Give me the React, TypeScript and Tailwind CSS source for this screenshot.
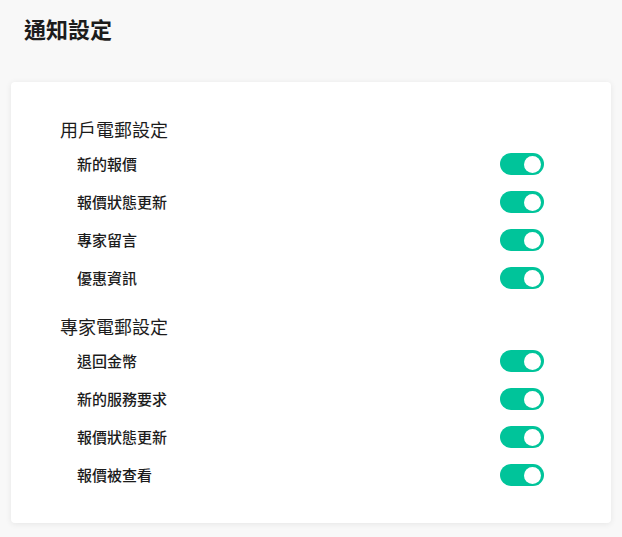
import { useState } from 'react';

const groups = [
  { title: '用戶電郵設定', items: ['新的報價', '報價狀態更新', '專家留言', '優惠資訊'] },
  { title: '專家電郵設定', items: ['退回金幣', '新的服務要求', '報價狀態更新', '報價被查看'] },
];

function Toggle({ on, onClick }: { on: boolean; onClick: () => void }) {
  return (
    <button
      onClick={onClick}
      className={`flex h-[22px] w-[44px] items-center rounded-full px-[3px] ${
        on ? 'justify-end bg-[#00c49a]' : 'justify-start bg-[#cfcfcf]'
      }`}
    >
      <span className="block h-[17px] w-[17px] rounded-full bg-white" />
    </button>
  );
}

export default function App() {
  const [state, setState] = useState<Record<string, boolean>>({});

  return (
    <div
      className="min-h-[537px] bg-[#f8f8f8] px-[11px] pt-[14px] text-[#1c1c1c]"
      style={{ fontFamily: '"Noto Sans CJK TC", "Noto Sans", sans-serif' }}
    >
      <h1 className="ml-[13px] h-[28px] text-[22px] font-bold leading-[28px]">通知設定</h1>
      <div className="mt-[40px] w-[600px] rounded-[4px] bg-white pb-[29px] pl-[49px] pr-[67px] pt-[33px] shadow-[0_1px_6px_rgba(0,0,0,0.08)]">
        {groups.map((g, gi) => (
          <div key={g.title} className={gi > 0 ? 'mt-[15px]' : ''}>
            <h2 className="h-[28px] text-[18px] leading-[28px]">{g.title}</h2>
            <div className="mt-[2px]">
              {g.items.map((item) => {
                const key = g.title + item;
                const on = state[key] ?? true;
                return (
                  <div key={key} className="flex h-[38px] items-center justify-between pl-[17px]">
                    <span className="text-[15px] font-medium">{item}</span>
                    <Toggle on={on} onClick={() => setState({ ...state, [key]: !on })} />
                  </div>
                );
              })}
            </div>
          </div>
        ))}
      </div>
    </div>
  );
}
